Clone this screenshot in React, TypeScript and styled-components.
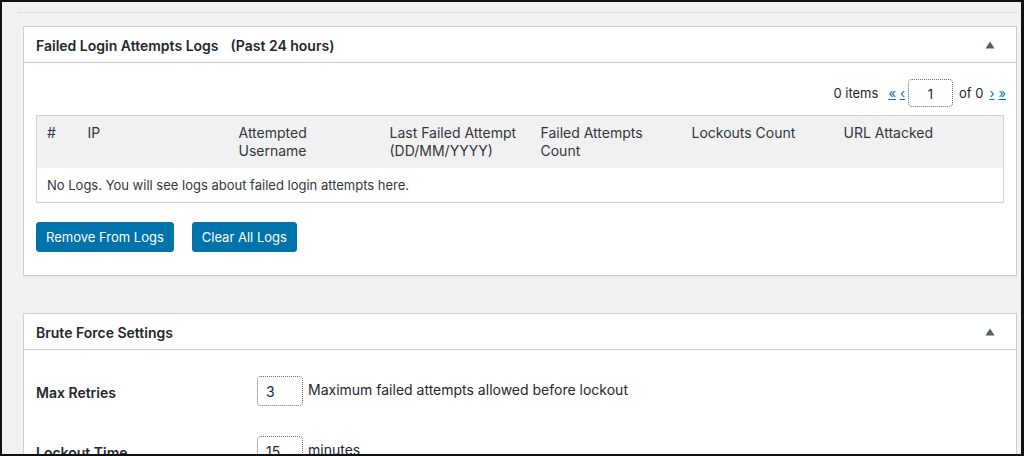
import styled, { createGlobalStyle } from 'styled-components'

const GlobalStyle = createGlobalStyle`
  html, body {
    margin: 0;
    padding: 0;
    background: #111;
  }
  body {
    font-family: Inter, 'Noto Sans', 'Liberation Sans', sans-serif;
    font-size: 13px;
    color: #23282d;
  }
  * {
    box-sizing: border-box;
  }
`

const columns = [
  { label: '#', width: 41 },
  { label: 'IP', width: 151 },
  { label: 'Attempted Username', width: 151 },
  { label: 'Last Failed Attempt (DD/MM/YYYY)', width: 151 },
  { label: 'Failed Attempts Count', width: 151 },
  { label: 'Lockouts Count', width: 152 },
  { label: 'URL Attacked', width: 170 },
]

const settings = [
  { label: 'Max Retries', value: '3', hint: 'Maximum failed attempts allowed before lockout' },
  { label: 'Lockout Time', value: '15', hint: 'minutes' },
]

const ToggleArrow = () => (
  <svg width='10' height='8' viewBox='0 0 10 8'>
    <path d='M5 0.5 L9.5 7.5 L0.5 7.5 Z' fill='#555d66' />
  </svg>
)

const App = () => {
  return (
    <>
      <GlobalStyle />
      <Frame>
        <Content>
          <DottedRule />
          <Postbox>
            <PostboxHeader>
              <h2>
                Failed Login Attempts Logs<Sub>(Past 24 hours)</Sub>
              </h2>
              <ToggleArrow />
            </PostboxHeader>
            <PostboxBody>
              <Tablenav>
                <span className='count'>0 items</span>
                <PageLink>«</PageLink>
                <PageLink>‹</PageLink>
                <PageInput>1</PageInput>
                <span className='total'>of 0</span>
                <PageLink>›</PageLink>
                <PageLink>»</PageLink>
              </Tablenav>
              <LogsTable>
                <colgroup>
                  {columns.map((col) => (
                    <col key={col.label} style={{ width: col.width }} />
                  ))}
                </colgroup>
                <thead>
                  <tr>
                    {columns.map((col) => (
                      <th key={col.label}>{col.label}</th>
                    ))}
                  </tr>
                </thead>
                <tbody>
                  <tr>
                    <td colSpan={columns.length}>
                      No Logs. You will see logs about failed login attempts here.
                    </td>
                  </tr>
                </tbody>
              </LogsTable>
              <Actions>
                <Button>Remove From Logs</Button>
                <Button>Clear All Logs</Button>
              </Actions>
            </PostboxBody>
          </Postbox>

          <Postbox $gap={37}>
            <PostboxHeader>
              <h2>Brute Force Settings</h2>
              <ToggleArrow />
            </PostboxHeader>
            <SettingsBody>
              {settings.map((row) => (
                <SettingRow key={row.label}>
                  <SettingLabel>{row.label}</SettingLabel>
                  <SettingField>
                    <SmallInput>{row.value}</SmallInput>
                    <span>{row.hint}</span>
                  </SettingField>
                </SettingRow>
              ))}
            </SettingsBody>
          </Postbox>
        </Content>
      </Frame>
    </>
  )
}

const Frame = styled.div`
  height: 456px;
  overflow: hidden;
  border-style: solid;
  border-color: #111;
  border-width: 2px 3px 2px 2px;
  background: #f1f1f1;
`

const Content = styled.div`
  padding: 10px 4px 0 21px;
`

const DottedRule = styled.div`
  margin-left: -5px;
  border-top: 1px dotted #c8c8c8;
  height: 0;
`

const Postbox = styled.div<{ $gap?: number }>`
  margin-top: ${(p) => p.$gap ?? 13}px;
  background: #fff;
  border: 1px solid #ccd0d4;
  box-shadow: 0 1px 1px rgba(0, 0, 0, 0.04);
`

const PostboxHeader = styled.div`
  height: 36px;
  display: flex;
  align-items: center;
  justify-content: space-between;
  padding: 1px 21px 0 12px;
  border-bottom: 1px solid #ccd0d4;
  h2 {
    margin: 0;
    font-size: 14px;
    font-weight: 600;
    color: #23282d;
  }
`

const Sub = styled.span`
  margin-left: 12px;
`

const PostboxBody = styled.div`
  padding: 16px 12px 23px;
`

const Tablenav = styled.div`
  display: flex;
  align-items: center;
  justify-content: flex-end;
  height: 28px;
  margin-right: -4px;
  font-size: 13px;
  color: #23282d;
  .count {
    margin-right: 8px;
  }
  .total {
    margin-right: 4px;
  }
`

const PageLink = styled.a`
  color: #0073aa;
  text-decoration: underline;
  font-size: 13px;
  margin: 0 2px;
  cursor: pointer;
`

const PageInput = styled.div`
  width: 45px;
  height: 28px;
  margin: 0 6px 0 1px;
  border: 1px dotted #6c6c6c;
  border-radius: 4px;
  display: flex;
  align-items: center;
  justify-content: center;
  font-size: 13px;
  padding-top: 2px;
`

const LogsTable = styled.table`
  width: 100%;
  margin-top: 8px;
  border-collapse: collapse;
  table-layout: fixed;
  border: 1px solid #ccd0d4;
  th {
    text-align: left;
    vertical-align: top;
    font-weight: 400;
    font-size: 14px;
    background: #f1f1f1;
    padding: 8px 10px;
    line-height: 18px;
    color: #32373c;
  }
  td {
    padding: 8px 10px;
    line-height: 18px;
    color: #32373c;
    background: #fff;
  }
`

const Actions = styled.div`
  display: flex;
  gap: 18px;
  margin-top: 19px;
`

const Button = styled.button`
  height: 30px;
  padding: 0 9px;
  border: 1px solid #0073aa;
  border-radius: 3px;
  background: #0073aa;
  color: #fff;
  font-family: inherit;
  font-size: 13px;
  cursor: pointer;
`

const SettingsBody = styled.div`
  padding: 11px 12px 0;
`

const SettingRow = styled.div`
  display: grid;
  grid-template-columns: 221px 1fr;
  align-items: center;
  padding: 15px 0;
`

const SettingLabel = styled.div`
  font-size: 14px;
  font-weight: 600;
  color: #23282d;
  padding-top: 2px;
`

const SettingField = styled.div`
  display: flex;
  align-items: center;
  gap: 5px;
  font-size: 14px;
  color: #23282d;
  span {
    margin-top: -4px;
  }
`

const SmallInput = styled.div`
  width: 46px;
  height: 30px;
  border: 1px dotted #6c6c6c;
  border-radius: 4px;
  display: flex;
  align-items: center;
  padding-left: 8px;
  font-size: 14px;
`

export default App
